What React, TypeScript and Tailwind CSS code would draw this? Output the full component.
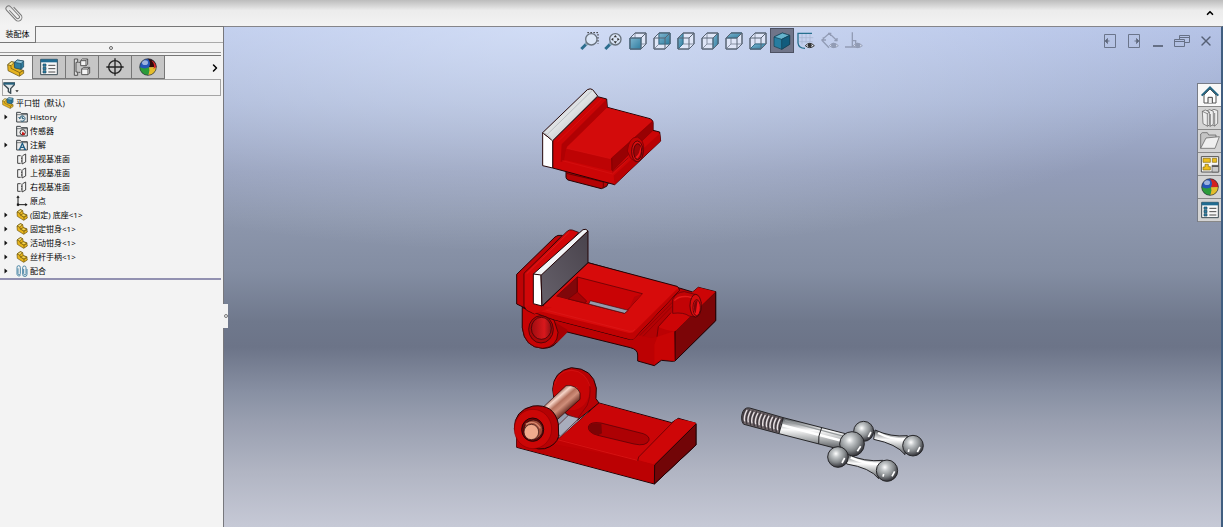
import type { ReactNode } from "react";
import { ChevronRight, ChevronUp, X } from "lucide-react";

type IconProps = { className?: string };

const CUBE_FACES = {
  front: "M2 7H13V18H2Z",
  back: "M7 2H18V13H7Z",
  left: "M2 7L7 2V13L2 18Z",
  right: "M13 7L18 2V13L13 18Z",
  top: "M2 7L7 2H18L13 7Z",
  bottom: "M2 18L7 13H18L13 18Z",
};

function PaperclipIcon() {
  return (
    <svg viewBox="0 0 54 54" className="h-[18px] w-[18px]" fill="none" stroke="#777" strokeWidth="3">
      <path
        transform="translate(26 27) rotate(-43)"
        d="M-4 -15V17a5 5 0 0 0 10 0V-20a8 8 0 0 0 -16 0V19a11 11 0 0 0 22 0V-13"
      />
    </svg>
  );
}

function PartIcon({ className = "h-3 w-3" }: IconProps) {
  return (
    <svg viewBox="0 0 36 36" className={className} stroke="#6b5208" strokeWidth="2" strokeLinejoin="round">
      <path d="M3 9L13 2L20 5L22 14L32 17L34 27L23 34L4 22Z" fill="#e9b61c" />
      <path d="M3 9L13 2L20 5L11 12Z" fill="#f9df70" />
      <path d="M11 12L13 18L24 24L34 19M24 24V33" fill="none" />
      <path d="M13 18L22 14L32 18L24 24Z" fill="#f6d34b" />
    </svg>
  );
}

function AssemblyIcon({ className = "h-[18px] w-[18px]" }: IconProps) {
  return (
    <svg viewBox="0 0 54 54" className={className} stroke="#5c4a10" strokeWidth="2" strokeLinejoin="round">
      <path d="M2 17L13 8L22 10V23L50 35V43L37 52L3 35Z" fill="#e5b320" />
      <path d="M2 17L13 8L22 10L12 20Z" fill="#fae47e" />
      <path d="M12 20V28L38 41L50 34M38 41V51" fill="none" />
      <path d="M22 10L31 3L50 6V24L42 31L23 27Z" fill="#2f7d9f" stroke="#1b4459" />
      <path d="M22 10L31 3L50 6L42 14Z" fill="#8dc6dd" stroke="#1b4459" />
      <path d="M42 14V31" stroke="#1b4459" />
    </svg>
  );
}

function PropertyIcon({ className = "h-[18px] w-[18px]" }: IconProps) {
  return (
    <svg viewBox="0 0 54 54" className={className} fill="none">
      <path d="M2 4H52V50H2Z" fill="#f7f7f7" stroke="#3b4b54" strokeWidth="3" />
      <path d="M2 4H52V13H2Z" fill="#206b91" />
      <path d="M9 18H18V25H9ZM9 28H18V35H9ZM9 38H18V45H9Z" fill="#2a7fa6" stroke="#19475e" strokeWidth="2" />
      <path d="M25 22H46M25 32H46M25 42H46" stroke="#4b4b4b" strokeWidth="3" />
    </svg>
  );
}

function ConfigurationIcon() {
  return (
    <svg viewBox="0 0 54 54" className="h-[18px] w-[18px]" fill="#f4f4f4" stroke="#555" strokeWidth="3">
      <path d="M4 3H14V13H9V42H14V52H4ZM16 13H22M16 43H22" fill="#d8d8d8" />
      <path d="M23 8L28 3H44V19L39 23H23ZM23 8H39V23M39 8L44 3" />
      <path d="M26 33L31 28H50V45L45 50H26ZM26 33H45V50M45 33L50 28" />
    </svg>
  );
}

function CrosshairIcon() {
  return (
    <svg viewBox="0 0 54 54" className="h-[18px] w-[18px]" fill="none" stroke="#222" strokeWidth="4">
      <circle cx="27" cy="27" r="19" />
      <path d="M27 1V53M1 27H53" />
    </svg>
  );
}

function BallIcon({ className = "h-[18px] w-[18px]", dark = false }: IconProps & { dark?: boolean }) {
  return (
    <svg viewBox="0 0 54 54" className={className}>
      <circle cx="27" cy="27" r="25" fill="#2456b8" />
      <path d="M27 2Q37 13 30 28L52 27A25 25 0 0 0 27 2Z" fill={dark ? "#330b0b" : "#d32020"} />
      <path d="M30 28L52 27A25 25 0 0 1 27 52Q33 40 30 28Z" fill="#e4bd2c" />
      <path d="M2 27Q17 35 30 28Q33 40 27 52A25 25 0 0 1 2 27Z" fill="#2b9b3a" />
      {dark && <path d="M42 9Q51 16 52 27L43 33Q49 20 38 8Z" fill="#d9222a" />}
      <ellipse cx="18" cy="14" rx="9" ry="7" fill="#fff" opacity="0.55" />
      <circle cx="27" cy="27" r="25" fill="none" stroke="#333" strokeWidth="2" />
    </svg>
  );
}

function FolderIcon({ children }: { children: ReactNode }) {
  return (
    <svg viewBox="0 0 36 36" className="h-3 w-3" fill="none" stroke="#3d4347" strokeWidth="3">
      <path d="M2 33V4H13L16 8H34V33Z" fill="#ececec" />
      <path d="M2 11H34" strokeWidth="2" />
      {children}
    </svg>
  );
}

function HistoryIcon() {
  return (
    <FolderIcon>
      <path d="M11 22a8 8 0 1 1 3 7M8 18L11 23L16 19M19 17V23H24" stroke="#1f5876" />
    </FolderIcon>
  );
}

function SensorIcon() {
  return (
    <FolderIcon>
      <circle cx="20" cy="22" r="8" stroke="#333" />
      <path d="M20 22L26 27L19 29Z" fill="#d51818" stroke="#c11" />
    </FolderIcon>
  );
}

function AnnotationIcon() {
  return (
    <FolderIcon>
      <path d="M11 31L19 13L27 31M14 25H24M8 31H14M23 31H30" stroke="#1f5f86" strokeWidth="4" />
    </FolderIcon>
  );
}

function PlaneIcon() {
  return (
    <svg viewBox="0 0 36 36" className="h-3 w-3" fill="none" stroke="#444" strokeWidth="3">
      <path d="M14 8H5V31H14M20 8L29 3V27L18 33V8" />
      <path d="M17 14V18M17 22V26" />
    </svg>
  );
}

function OriginIcon() {
  return (
    <svg viewBox="0 0 36 36" className="h-3 w-3" fill="none" stroke="#1b1b1b" strokeWidth="3">
      <path d="M6 4V29H33" />
      <path d="M2 8L6 2L10 8ZM28 25L34 29L28 33ZM3 26H9V32H3Z" fill="#1b1b1b" strokeWidth="1" />
    </svg>
  );
}

function MatesIcon() {
  return (
    <svg viewBox="0 0 36 36" className="h-3 w-3" fill="none" stroke="#4c87a6" strokeWidth="3">
      <path d="M6 10V26a3 3 0 0 0 7 0V7a5 5 0 0 0-10 0V28a6 6 0 0 0 11 2" />
      <path d="M23 12V26a3 3 0 0 0 7 0V8a5 5 0 0 0-10 0V28a6 6 0 0 0 13 0V12" />
    </svg>
  );
}

function FilterIcon() {
  return (
    <svg viewBox="0 0 48 36" className="h-3 w-4">
      <path d="M3 3H34V8L23 20V34L16 29V20L3 8Z" fill="#dfe6ea" stroke="#3c4b53" strokeWidth="4" />
      <path d="M2 2H35V8H2Z" fill="#24607c" />
      <path d="M37 25H47L42 31Z" fill="#222" />
    </svg>
  );
}

function CubeIcon({ face }: { face: keyof typeof CUBE_FACES }) {
  return (
    <svg viewBox="0 0 20 20" className="h-5 w-5" fill="none" stroke="#596474" strokeWidth="1">
      <path d="M2 7L7 2H18V13L13 18H2Z" fill="#eef2fb" fillOpacity="0.6" />
      <path d="M7 2V13H18M7 13L2 18" stroke="#8791a3" />
      <path d={CUBE_FACES[face]} fill="url(#cube-face)" stroke="#35708c" />
      <path d="M2 7H13V18M13 7L18 2" />
      <path d="M2 7L7 2H18V13L13 18H2Z" />
    </svg>
  );
}

function ZoomIcon({ area = false }: { area?: boolean }) {
  return (
    <svg viewBox="0 0 60 60" className="h-5 w-5" fill="none">
      <path d="M22 36L4 54" stroke="#2d6e8e" strokeWidth="9" />
      <path d="M23 35L17 41" stroke="#8aa7b7" strokeWidth="9" />
      {area && <path d="M22 5H54V38" stroke="#333" strokeWidth="3" strokeDasharray="5 4" />}
      <circle cx="34" cy="25" r="17" fill="#dbe6f7" stroke="#69737e" strokeWidth="4" />
      {!area && (
        <path
          d="M34 12L39 19H29ZM34 38L29 31H39ZM21 25L28 20V30ZM47 25L40 30V20Z"
          fill="#333"
        />
      )}
    </svg>
  );
}

function ShadedIcon() {
  return (
    <svg viewBox="0 0 60 60" className="h-5 w-5" stroke="#143c50" strokeWidth="2" strokeLinejoin="round">
      <path d="M6 18L31 6L53 13V40L29 55L6 46Z" fill="#267da0" />
      <path d="M6 18L31 6L53 13L29 25Z" fill="#66b4cd" />
      <path d="M29 25L53 13V40L29 55Z" fill="#125c7d" />
    </svg>
  );
}

function Eye({ color }: { color: string }) {
  return (
    <g>
      <path d="M28 44Q41 30 55 44Q41 56 28 44Z" fill="#e9eefa" stroke={color} strokeWidth="3" />
      <circle cx="41" cy="43" r="6" fill={color} />
    </g>
  );
}

function SketchIcon() {
  return (
    <svg viewBox="0 0 60 60" className="h-5 w-5" fill="none">
      <path d="M18 8V40M30 8V36M42 8V34M10 20H52M10 32H50" stroke="#a7b3cf" strokeWidth="2" />
      <path d="M48 7H6V36Q8 52 27 52" stroke="#27708f" strokeWidth="4" />
      <Eye color="#333" />
    </svg>
  );
}

function DimensionIcon() {
  return (
    <svg viewBox="0 0 60 60" className="h-5 w-5" fill="none" stroke="#929cb5" strokeWidth="4">
      <path d="M5 27L28 7L52 30M5 27L27 50M10 19V27H18M24 7H32V15M43 29H51V21" />
      <Eye color="#929cb5" />
    </svg>
  );
}

function MateViewIcon() {
  return (
    <svg viewBox="0 0 60 60" className="h-5 w-5" fill="none" stroke="#929cb5" strokeWidth="4">
      <path d="M25 4V48M3 48H38M25 29H35V42" />
      <Eye color="#929cb5" />
    </svg>
  );
}

function HomeIcon() {
  return (
    <svg viewBox="0 0 60 60" className="h-5 w-5" fill="none">
      <path d="M12 30V54H48V30L30 12Z" fill="#fff" stroke="#555" strokeWidth="3" />
      <path d="M24 54V37H37V54" fill="#eee" stroke="#444" strokeWidth="3" />
      <path d="M5 32L30 7L55 32" stroke="#20627f" strokeWidth="6" />
    </svg>
  );
}

function LibraryIcon() {
  return (
    <svg viewBox="0 0 60 60" className="h-5 w-5" fill="#ededed" stroke="#555" strokeWidth="2" strokeLinejoin="round">
      <path d="M33 8L42 4L53 8V46L44 54L33 48Z" />
      <path d="M20 9L29 5L40 10V49L31 55L20 49Z" />
      <path d="M7 10L16 6L28 12V50L23 55L9 47Z" />
      <path d="M7 10L22 17L28 12M22 17V54M31 18V54M44 15V54" fill="none" />
    </svg>
  );
}

function ExplorerIcon() {
  return (
    <svg viewBox="0 0 60 60" className="h-5 w-5" stroke="#555" strokeWidth="2" strokeLinejoin="round">
      <path d="M2 52V9L7 5H22L26 12H48V23" fill="#c5c5c5" />
      <path d="M2 52L18 21L58 17L45 52Z" fill="#efefef" />
    </svg>
  );
}

function PaletteIcon() {
  return (
    <svg viewBox="0 0 60 60" className="h-5 w-5" strokeWidth="2">
      <path d="M4 8H56V54H4Z" fill="#f8f8f8" stroke="#505050" strokeWidth="3" />
      <path d="M9 13H31V25H9ZM37 13H50V25H37ZM15 31H25V38H31V48H9V39H15Z" fill="#eebf1d" stroke="#826a13" />
      <path d="M36 34H56V54H36Z" fill="#c9c9c9" stroke="#555" />
      <path d="M36 34H56V39H36Z" fill="#555" />
    </svg>
  );
}

function DocArrowIcon({ back = false }: { back?: boolean }) {
  return (
    <svg viewBox="0 0 32 32" className="h-4 w-4" fill="none" stroke="#6b758b" strokeWidth="2">
      <path d="M5 3H27V29H5Z" />
      {back ? (
        <path d="M11 11V21L6 16ZM11 16H15" fill="#5c6578" />
      ) : (
        <path d="M21 11V21L26 16ZM21 16H17" fill="#5c6578" />
      )}
    </svg>
  );
}

function RestoreIcon() {
  return (
    <svg viewBox="0 0 32 32" className="h-4 w-4" fill="none" stroke="#667086" strokeWidth="2">
      <path d="M11 12V5H31V19H22M11 9H31" />
      <path d="M1 13H21V27H1ZM1 17H21" />
    </svg>
  );
}

function MovingJaw() {
  return (
    <g transform="translate(530 80) scale(0.333333)" stroke="#240406" strokeWidth="3" strokeLinejoin="round">
      <path d="M108 273V292Q109 298 114 300L214 326L230 319L235 309L250 304Z" fill="#b40204" />
      <path d="M109 280L220 306V325" fill="none" stroke="#690000" />
      <path d="M68 182L203 50L230 57L232 82L360 116Q369 119 369 129V151L389 156L392 183L254 314L68 264Z" fill="#cc0506" />
      <path d="M95 193L228 60L232 82L109 205L104 241L92 246Z" fill="#b00103" stroke="none" />
      <path d="M82 186L217 55" stroke="#de1212" strokeWidth="2" />
      <path d="M110 202L231 83L360 118Q367 121 363 127L254 230Q247 237 238 235L116 209Z" fill="#d30b0b" stroke="none" />
      <path d="M109 205L242 236V273L102 239Z" fill="#bd0304" stroke="none" />
      <path d="M245 234L369 123V151L342 177L247 273Z" fill="#980103" stroke="#8a0002" strokeWidth="2" />
      <path d="M251 287L390 160L392 183L254 314Z" fill="#b90204" stroke="none" />
      <path d="M97 242L248 282L295 237M250 274L293 234M110 205L242 236" fill="none" stroke="#d71212" strokeWidth="2" />
      <path d="M245 235V271M247 276L295 234" fill="none" stroke="#780003" strokeWidth="2" />
      <path d="M292 213Q297 171 322 171Q343 180 341 209Q340 242 318 246L302 235Z" fill="#c30304" stroke="#8c0003" />
      <ellipse cx="322" cy="214" rx="17" ry="31" fill="#dc0e0f" strokeWidth="2" />
      <ellipse cx="323" cy="215" rx="12" ry="24" fill="#9c0508" strokeWidth="2" />
      <path d="M316 232Q331 220 331 197Q338 217 322 236Z" fill="#ef1519" stroke="none" />
      <path d="M38 158L68 182V264L38 257Z" fill="#fff" />
      <path d="M38 158L172 29Q181 24 188 29L203 48L68 182Z" fill="url(#plate-top)" />
      <path d="M39 158L52 163L68 182M52 163L187 31" fill="none" stroke="#a9afb3" strokeWidth="2" />
    </g>
  );
}

function FixedJaw() {
  return (
    <g transform="translate(505 220) scale(0.333333)" stroke="#230406" strokeWidth="3" strokeLinejoin="round">
      {/* Body and end block */}
      <path
        d="M52 260V324Q58 382 113 385Q143 385 157 365L186 336L376 383Q398 388 398 405V423L448 437L469 421L501 424L510 423L632 302V215L580 202L563 216L523 204L249 128L85 215L57 265Z"
        fill="#bc0103"
      />
      <path d="M510 334L632 215V302L510 423Z" fill="#7c0507" />
      <path d="M457 350L507 334L510 423L470 418L448 433V374Z" fill="#c80404" stroke="none" />
      <path d="M563 216L580 202L632 215L513 332Q497 337 460 321L505 270Z" fill="#cd0506" stroke="none" />
      <path d="M400 345L503 240L505 270L458 320L456 350L438 354Z" fill="#b40204" stroke="none" />
      <path d="M456 350L460 320L498 278" fill="none" stroke="#540206" strokeWidth="2" />
      <path d="M510 336V422" stroke="#540206" strokeWidth="2" />
      <path d="M404 347L502 247M414 349L501 259" stroke="#890003" strokeWidth="2" />

      {/* Table with the opening */}
      <path d="M249 128L516 199Q523 202 523 211L394 348Q386 361 374 358L86 283L57 264L112 258Z" fill="#d70b0b" />
      <path d="M78 267L372 339Q384 341 390 332L516 207L523 211L394 348Q386 361 374 358L86 283Z" fill="#c00203" stroke="none" />
      <path d="M122 270L374 334Q383 336 390 328" fill="none" stroke="#dd1919" strokeWidth="2" />
      <path d="M155 228L217 171L412 221L359 280Z" fill="#c90305" stroke="#4d0205" strokeWidth="2" />
      <path d="M155 228L217 171V216L190 237Z" fill="#80070a" stroke="none" />
      <path d="M217 171V216L245 243L240 249L190 237L217 216Z" fill="#a20305" stroke="#650205" strokeWidth="2" />
      <path d="M251 252L256 242L370 271L359 280Z" fill="#949cad" stroke="#4c080b" strokeWidth="2" />
      <path d="M359 280L412 221L388 230L370 270Z" fill="#b80306" stroke="none" />

      {/* Pivot eye */}
      <path d="M135 297L187 329L186 338L155 370Z" fill="#a60002" stroke="none" />
      <path d="M52 263V323Q58 382 113 385Q157 382 159 337L147 300L112 287Z" fill="#c80304" strokeWidth="2" />
      <ellipse cx="108" cy="328" rx="37" ry="41" fill="#a80608" strokeWidth="2" />
      <ellipse cx="109" cy="325" rx="30" ry="33" fill="url(#eye-red)" strokeWidth="2" />

      {/* Jaw and its plate */}
      <path d="M35 163L150 51Q157 44 172 46L60 161V264L35 252Z" fill="#be0305" />
      <path d="M57 160L185 35Q193 27 202 30L221 37L115 163V260L88 282L65 271L57 259Z" fill="#d10708" strokeWidth="2" />
      <path d="M65 161L193 36" stroke="#e52222" strokeWidth="2" />
      <path d="M62 262L88 281L140 262L111 258L85 251Z" fill="#cd0707" stroke="none" />
      <path d="M85 162L234 29Q244 25 249 33L111 168Z" fill="#f2f4f6" />
      <path d="M85 162L108 165L111 258L85 251Z" fill="#fff" />
      <path d="M108 166L249 33V128L111 258Z" fill="url(#plate-face)" />

      {/* Screw boss */}
      <path d="M503 276V238Q514 216 538 215L574 224L588 248L572 291L552 288Q537 276 503 280Z" fill="#c20305" stroke="#51030a" strokeWidth="2" />
      <path d="M508 242Q521 227 549 230L566 234" fill="none" stroke="#e51a1a" strokeWidth="4" />
      <ellipse cx="572" cy="257" rx="17" ry="34" fill="#d60c0d" strokeWidth="2" />
      <ellipse cx="575" cy="263" rx="11" ry="24" fill="#f01319" strokeWidth="2" />
      <path d="M567 258Q568 241 578 240L572 280Q566 275 567 258Z" fill="#820409" stroke="none" />
    </g>
  );
}

function Base() {
  return (
    <g transform="translate(505 360) scale(0.333333)" stroke="#220406" strokeWidth="3" strokeLinejoin="round">
      <path d="M143 88Q145 33 199 23Q265 25 274 84L273 116L282 129L218 180L187 164L149 130Z" fill="#b70204" />
      <ellipse cx="199" cy="90" rx="55" ry="61" fill="#c70405" stroke="none" />
      <path d="M149 73Q160 31 201 31Q242 34 256 81" fill="none" stroke="#d61515" strokeWidth="2" />
      <path d="M255 78Q257 112 246 137L217 177" fill="none" stroke="#780004" strokeWidth="2" />
      <path d="M35 222V262L448 372L573 255V190L520 175L500 188L282 129L165 234Z" fill="#c00204" />
      <path d="M282 130L499 190L397 300L160 237Z" fill="#ca0507" stroke="none" />
      <path d="M150 205L190 166L222 175L165 230Z" fill="#a8adbc" stroke="#4a1015" strokeWidth="2" />
      <path d="M398 303L401 291L509 181Q515 176 522 177L568 187Q576 190 571 197L456 307Q448 315 438 311Z" fill="#ce0607" stroke="none" />
      <path d="M398 300L444 313L448 316V370L35 261V232Z" fill="#bb0103" stroke="none" />
      <path d="M449 315L573 192V255L448 372Z" fill="#720507" />
      <path d="M398 303L401 291L509 181" fill="none" stroke="#4e0205" strokeWidth="2" />
      <path d="M157 239L397 301" fill="none" stroke="#d51212" strokeWidth="3" />
      <path d="M250 201Q253 184 288 189L415 221Q435 229 432 241Q424 260 387 252L278 226Q249 218 250 201Z" fill="#ad0104" stroke="#480207" strokeWidth="2" />
      <path d="M252 200Q256 186 289 191L291 220L279 226Q250 218 252 200Z" fill="#7d0305" stroke="none" />

      {/* Copper pin */}
      <path d="M112 144L183 77Q215 74 225 99V118L151 184Z" fill="url(#copper)" strokeWidth="2" />
      <path d="M28 207Q27 151 84 138Q147 131 160 191L161 229Q154 256 119 266Q84 271 51 247Z" fill="#b40204" />
      <ellipse cx="84" cy="207" rx="56" ry="59" fill="#cc0606" stroke="#8f0003" strokeWidth="2" />
      <ellipse cx="83" cy="209" rx="33" ry="35" fill="#720508" />
      <ellipse cx="85" cy="209" rx="28" ry="29" fill="#9e4a38" strokeWidth="2" />
      <ellipse cx="79" cy="216" rx="22" ry="23" fill="#f0aa8d" strokeWidth="2" />
      <path d="M62 193Q89 177 106 205" fill="none" stroke="#d98a70" strokeWidth="4" />
    </g>
  );
}

const THREADS = [38, 49, 60, 71, 82, 93, 104, 115, 126, 137, 148];

function ScrewHandle() {
  return (
    <g transform="translate(730 395) scale(0.333333)" stroke="#262629" strokeWidth="3" strokeLinejoin="round">
      <path d="M35 62Q40 35 59 39L160 68L147 116L42 88Q34 84 35 62Z" fill="#6c6266" />
      {THREADS.map((x) => (
        <g key={x} transform={`translate(${x} ${40 + (x - 38) * 0.27})`} fill="none">
          <path d="M10 0Q-4 20 2 45" stroke="#3d373d" strokeWidth="4" />
          <path d="M13 5Q2 25 6 39" stroke="#e8e2e5" strokeWidth="4" />
        </g>
      ))}
      <path d="M160 68L354 118L333 164L147 116Z" fill="url(#shaft)" />
      <path d="M165 77L345 125" stroke="#95999b" strokeWidth="4" />
      <path d="M157 91L338 138" stroke="#fff" strokeWidth="8" />
      <path d="M275 98Q263 124 266 147" fill="none" />
      <circle cx="401" cy="109" r="30" fill="url(#chrome)" />
      <path d="M435 105Q483 127 532 122L525 179Q500 147 431 133Z" fill="url(#shaft)" />
      <path d="M444 114Q492 137 527 132" fill="none" stroke="#fff" strokeWidth="7" />
      <circle cx="549" cy="152" r="31" fill="url(#chrome)" />
      <circle cx="366" cy="147" r="37" fill="url(#chrome)" />
      <path d="M350 177Q404 202 459 196L446 251Q420 218 350 207Z" fill="url(#shaft)" />
      <path d="M362 188Q416 211 454 205" fill="none" stroke="#fff" strokeWidth="7" />
      <circle cx="471" cy="227" r="32" fill="url(#chrome)" />
      <circle cx="324" cy="186" r="31" fill="url(#chrome)" />
      <path d="M415 126l8-15M382 169l10-15M336 204l8-15M562 171l8-15M486 244l8-15M461 237l-2 8M537 163l-2 8" stroke="#fff" strokeWidth="5" />
    </g>
  );
}

function ModelCanvas() {
  return (
    <svg
      viewBox="224 27 997 500"
      className="pointer-events-none absolute inset-0 h-full w-full"
      role="img"
      aria-label="平口钳"
    >
      <defs>
        <linearGradient id="cube-face" x1="0" y1="0" x2="1" y2="1">
          <stop offset="0" stopColor="#7fb6d0" />
          <stop offset="1" stopColor="#2f7d9f" />
        </linearGradient>
        <linearGradient id="plate-top" x1="0" y1="0" x2="1" y2="1">
          <stop offset="0" stopColor="#d3d7da" />
          <stop offset="0.5" stopColor="#dfe2e4" />
          <stop offset="0.7" stopColor="#c0c5c9" />
        </linearGradient>
        <linearGradient id="plate-face" x1="0" y1="1" x2="1" y2="0">
          <stop offset="0" stopColor="#66616b" />
          <stop offset="1" stopColor="#49434c" />
        </linearGradient>
        <linearGradient id="eye-red">
          <stop offset="0" stopColor="#a00c10" />
          <stop offset="0.65" stopColor="#d8181c" />
          <stop offset="1" stopColor="#8b1014" />
        </linearGradient>
        <linearGradient id="copper" gradientUnits="userSpaceOnUse" x1="145" y1="105" x2="185" y2="151">
          <stop offset="0" stopColor="#8e5344" />
          <stop offset="0.25" stopColor="#f6d5c8" />
          <stop offset="0.48" stopColor="#b4705c" />
          <stop offset="0.7" stopColor="#cf8e7a" />
          <stop offset="1" stopColor="#783b2f" />
        </linearGradient>
        <linearGradient id="shaft" x1="0.54" y1="0" x2="0.46" y2="1">
          <stop offset="0.1" stopColor="#6a6e72" />
          <stop offset="0.4" stopColor="#fbfbfb" />
          <stop offset="0.7" stopColor="#a5a8aa" />
          <stop offset="1" stopColor="#414348" />
        </linearGradient>
        <radialGradient id="chrome" cx="0.4" cy="0.34" r="0.68">
          <stop offset="0" stopColor="#ffffff" />
          <stop offset="0.25" stopColor="#c3c7c9" />
          <stop offset="0.62" stopColor="#85898c" />
          <stop offset="1" stopColor="#2b2b31" />
        </radialGradient>
      </defs>
      <MovingJaw />
      <FixedJaw />
      <Base />
      <ScrewHandle />
    </svg>
  );
}

const PANEL_TABS = [
  { label: "FeatureManager", icon: <AssemblyIcon />, active: true },
  { label: "PropertyManager", icon: <PropertyIcon /> },
  { label: "ConfigurationManager", icon: <ConfigurationIcon /> },
  { label: "DimXpertManager", icon: <CrosshairIcon /> },
  { label: "DisplayManager", icon: <BallIcon dark /> },
];

const TREE = [
  { text: "History", icon: <HistoryIcon />, expandable: true },
  { text: "传感器", icon: <SensorIcon /> },
  { text: "注解", icon: <AnnotationIcon />, expandable: true },
  { text: "前视基准面", icon: <PlaneIcon /> },
  { text: "上视基准面", icon: <PlaneIcon /> },
  { text: "右视基准面", icon: <PlaneIcon /> },
  { text: "原点", icon: <OriginIcon /> },
  { text: "(固定) 底座<1>", icon: <PartIcon />, expandable: true },
  { text: "固定钳身<1>", icon: <PartIcon />, expandable: true },
  { text: "活动钳身<1>", icon: <PartIcon />, expandable: true },
  { text: "丝杆手柄<1>", icon: <PartIcon />, expandable: true },
  { text: "配合", icon: <MatesIcon />, expandable: true },
];

const VIEW_TOOLS = [
  { label: "Zoom to area", icon: <ZoomIcon area /> },
  { label: "Zoom to fit", icon: <ZoomIcon /> },
  { label: "Front", icon: <CubeIcon face="front" /> },
  { label: "Back", icon: <CubeIcon face="back" /> },
  { label: "Left", icon: <CubeIcon face="left" /> },
  { label: "Right", icon: <CubeIcon face="right" /> },
  { label: "Top", icon: <CubeIcon face="top" /> },
  { label: "Bottom", icon: <CubeIcon face="bottom" /> },
  { label: "Shaded with edges", icon: <ShadedIcon />, active: true },
  { label: "View sketches", icon: <SketchIcon /> },
  { label: "View dimensions", icon: <DimensionIcon /> },
  { label: "View mates", icon: <MateViewIcon /> },
];

const WINDOW_TOOLS = [
  { label: "Previous pane", icon: <DocArrowIcon back /> },
  { label: "Next pane", icon: <DocArrowIcon /> },
  { label: "Minimize", icon: <span className="mt-2.5 h-0.5 w-2.5 bg-[#667086]" /> },
  { label: "Restore", icon: <RestoreIcon /> },
  { label: "Close", icon: <X className="h-4 w-4 text-[#566075]" strokeWidth={2} /> },
];

const TASK_TABS = [
  { label: "Resources", icon: <HomeIcon />, active: true },
  { label: "Design library", icon: <LibraryIcon /> },
  { label: "File explorer", icon: <ExplorerIcon /> },
  { label: "View palette", icon: <PaletteIcon /> },
  { label: "Appearances", icon: <BallIcon /> },
  { label: "Custom properties", icon: <PropertyIcon /> },
];

function FeaturePanel() {
  return (
    <aside className="flex w-[224px] shrink-0 flex-col border-r border-[#77777c] bg-[#f3f3f3]">
      <div className="flex h-[17px]">
        <button className="w-9 border-r border-b border-[#777] text-center leading-3">装配体</button>
        <div className="flex-1 border-t border-b border-t-[#777] border-b-[#aaa]" />
      </div>
      <div className="mr-0.5 flex h-2.5 items-center justify-center border-b border-[#999]">
        <span className="h-1 w-1 rounded-full border border-[#666]" />
      </div>
      <div className="mt-0.5 mr-0.5 flex h-6 border-t border-[#777]">
        {PANEL_TABS.map((tab) => (
          <button
            key={tab.label}
            aria-label={tab.label}
            className={
              tab.active
                ? "flex w-[33px] items-center justify-center border-r border-[#777]"
                : "flex w-[33px] items-center justify-center border-r border-b border-[#777] bg-[#c6c6c6]"
            }
          >
            {tab.icon}
          </button>
        ))}
        <button aria-label="More tabs" className="ml-auto flex w-3 items-center justify-center">
          <ChevronRight className="h-3 w-3" strokeWidth={3} />
        </button>
      </div>
      <div className="mr-0.5 ml-0.5 flex h-[17px] items-center border border-[#a5a5a5]">
        <button aria-label="Filter">
          <FilterIcon />
        </button>
        <input aria-label="Filter text" className="h-3 min-w-0 flex-1 bg-transparent outline-none" />
      </div>

      <div className="mr-0.5 border-b-2 border-[#9291b1]">
        <button className="flex h-3.5 w-full items-center gap-0.5 pl-0.5 text-left">
          <AssemblyIcon className="h-3 w-3" />
          <span className="whitespace-pre">平口钳  (默认)</span>
        </button>
        <ul>
          {TREE.map((node) => (
            <li key={node.text}>
              <button className="flex h-3.5 w-full items-center pl-1 text-left">
                <svg viewBox="0 0 8 12" className="mr-2 h-1.5 w-1">
                  {node.expandable && <path d="M1 1L7 6L1 11Z" fill="#111" />}
                </svg>
                {node.icon}
                <span className="ml-0.5">{node.text}</span>
              </button>
            </li>
          ))}
        </ul>
      </div>
    </aside>
  );
}

function Viewport() {
  return (
    <main className="relative min-w-0 flex-1 border-t border-r-2 border-t-[#85858a] border-r-[#405e80] bg-[radial-gradient(ellipse_70%_45%_at_32%_0%,#e2ecffa0_0%,#e2ecff50_50%,transparent_100%),linear-gradient(to_bottom,#b4c2e6_0%,#a5b2d2_15%,#929cb8_29%,#8d97ad_38%,#838da2_49%,#6f788c_59%,#6c7488_64%,#8890a3_73%,#999fb0_79%,#b1b5c3_89%,#c6c9d6_100%)]">
      <ModelCanvas />
      <div className="relative grid grid-cols-[1fr_auto_1fr] items-start pt-px">
        <div />
        <div className="mr-0.5 flex">
          {VIEW_TOOLS.map((tool) => (
            <button
              key={tool.label}
              aria-label={tool.label}
              className={
                tool.active
                  ? "flex h-[25px] w-6 items-center justify-center border border-[#4d5263] bg-[#707589]"
                  : "flex h-[25px] w-6 items-center justify-center"
              }
            >
              {tool.icon}
            </button>
          ))}
        </div>
        <div className="flex justify-end pr-[3px]">
          {WINDOW_TOOLS.map((tool) => (
            <button key={tool.label} aria-label={tool.label} className="flex h-[25px] w-6 items-center justify-center">
              {tool.icon}
            </button>
          ))}
        </div>
      </div>
      <nav className="relative mt-[30px] ml-auto w-6 border-t border-l border-[#777c87]">
        {TASK_TABS.map((tab) => (
          <button
            key={tab.label}
            aria-label={tab.label}
            className={
              tab.active
                ? "flex h-[23px] w-full items-center justify-center border-b border-[#888] bg-[#f8f8f8]"
                : "flex h-[23px] w-full items-center justify-center border-b border-[#888] bg-[#d4d4d4]"
            }
          >
            {tab.icon}
          </button>
        ))}
      </nav>
      <button
        aria-label="Collapse panel"
        className="absolute top-[277px] -left-px flex h-6 w-[5px] items-center justify-center bg-[#f2f2f2]"
      >
        <span className="h-1 w-1 rounded-full border border-[#777]" />
      </button>
    </main>
  );
}

export default function App() {
  return (
    <div className="flex min-h-screen flex-col bg-[#f3f3f3] font-['Open_Sans','Noto_Sans_CJK_SC',sans-serif] text-[8px] text-black">
      <header className="flex h-[26px] shrink-0 items-center justify-between bg-linear-to-b from-[#bcbcbc] via-[#ececec] via-40% to-[#f3f3f3] pr-2 pl-[5px]">
        <button aria-label="Attach">
          <PaperclipIcon />
        </button>
        <button aria-label="Collapse ribbon">
          <ChevronUp className="h-2.5 w-2.5" strokeWidth={4} />
        </button>
      </header>
      <div className="flex flex-1">
        <FeaturePanel />
        <Viewport />
      </div>
    </div>
  );
}
